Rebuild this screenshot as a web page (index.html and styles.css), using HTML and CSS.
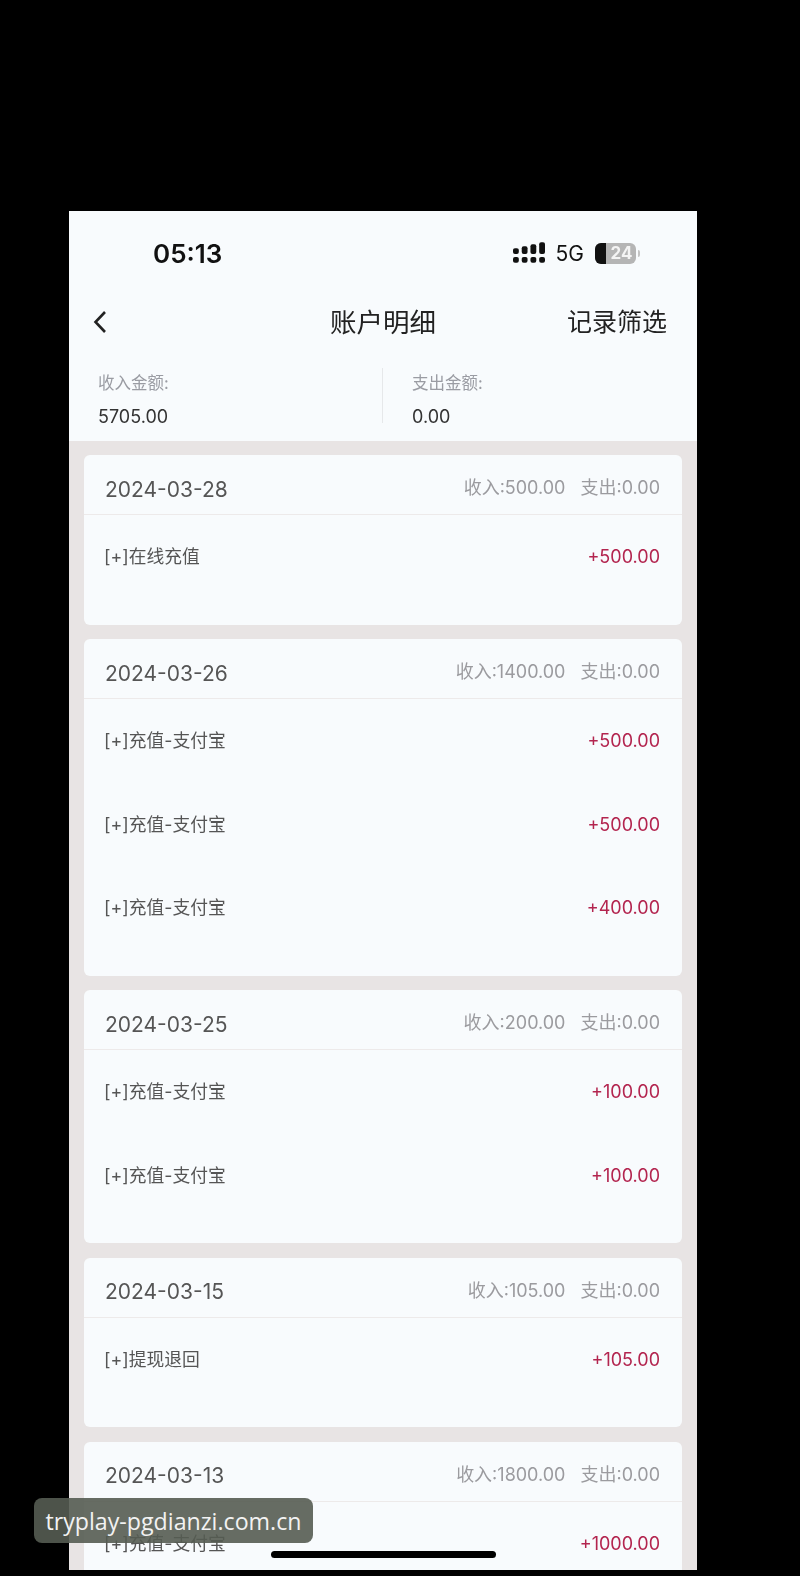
FILE: index.html
```html
<!DOCTYPE html>
<html lang="zh-CN">
<head>
    <meta charset="UTF-8">
    <meta name="viewport" content="width=device-width, initial-scale=1.0">
    <title>账户明细</title>
    <link rel="stylesheet" href="styles.css">
</head>
<body>
    <div class="phone">
        <div class="status">
            <span class="time">05:13</span>
            <div class="status-right">
                <svg class="signal" width="32" height="22" viewBox="0 0 33 22">
                    <rect x="0" y="6" width="6" height="6" rx="2"/>
                    <rect x="9" y="4" width="6" height="8" rx="2"/>
                    <rect x="18" y="2" width="6" height="10" rx="2"/>
                    <rect x="27" y="0" width="6" height="12" rx="2"/>
                    <rect x="0" y="15" width="6" height="6" rx="2"/>
                    <rect x="9" y="15" width="6" height="6" rx="2"/>
                    <rect x="18" y="15" width="6" height="6" rx="2"/>
                    <rect x="27" y="15" width="6" height="6" rx="2"/>
                </svg>
                <span class="net">5G</span>
                <div class="battery"><span class="battery-fill"></span><span class="battery-num">24</span></div>
                <span class="battery-cap"></span>
            </div>
        </div>

        <div class="nav">
            <svg class="back" width="14" height="24" viewBox="0 0 14 24">
                <path d="M12 2 L2.5 12 L12 22" fill="none" stroke="#222" stroke-width="2.6"/>
            </svg>
            <span class="nav-title">账户明细</span>
            <span class="nav-action">记录筛选</span>
        </div>

        <div class="summary">
            <div class="summary-col">
                <div class="summary-label">收入金额:</div>
                <div class="summary-value">5705.00</div>
            </div>
            <div class="summary-col summary-col-out">
                <div class="summary-label">支出金额:</div>
                <div class="summary-value">0.00</div>
            </div>
        </div>

        <div class="list">
            <div class="card">
                <div class="card-head">
                    <span class="date">2024-03-28</span>
                    <span class="totals"><span>收入:500.00</span><span>支出:0.00</span></span>
                </div>
                <div class="row"><span>[+]在线充值</span><span class="amount">+500.00</span></div>
            </div>

            <div class="card">
                <div class="card-head">
                    <span class="date">2024-03-26</span>
                    <span class="totals"><span>收入:1400.00</span><span>支出:0.00</span></span>
                </div>
                <div class="row"><span>[+]充值-支付宝</span><span class="amount">+500.00</span></div>
                <div class="row"><span>[+]充值-支付宝</span><span class="amount">+500.00</span></div>
                <div class="row"><span>[+]充值-支付宝</span><span class="amount">+400.00</span></div>
            </div>

            <div class="card">
                <div class="card-head">
                    <span class="date">2024-03-25</span>
                    <span class="totals"><span>收入:200.00</span><span>支出:0.00</span></span>
                </div>
                <div class="row"><span>[+]充值-支付宝</span><span class="amount">+100.00</span></div>
                <div class="row"><span>[+]充值-支付宝</span><span class="amount">+100.00</span></div>
            </div>

            <div class="card">
                <div class="card-head">
                    <span class="date">2024-03-15</span>
                    <span class="totals"><span>收入:105.00</span><span>支出:0.00</span></span>
                </div>
                <div class="row"><span>[+]提现退回</span><span class="amount">+105.00</span></div>
            </div>

            <div class="card">
                <div class="card-head">
                    <span class="date">2024-03-13</span>
                    <span class="totals"><span>收入:1800.00</span><span>支出:0.00</span></span>
                </div>
                <div class="row"><span>[+]充值-支付宝</span><span class="amount">+1000.00</span></div>
            </div>
        </div>
    </div>

    <div class="home-bar"></div>
    <div class="watermark">tryplay-pgdianzi.com.cn</div>
</body>
</html>
```

FILE: styles.css
```css
html, body {
    margin: 0;
    height: 100%;
}
body {
    position: relative;
    width: 800px;
    height: 1576px;
    padding: 211px 0 0 69px;
    box-sizing: border-box;
    overflow: hidden;
    background: #000;
    font-family: Inter, "Noto Sans CJK SC", sans-serif;
}
.phone {
    display: flex;
    flex-direction: column;
    width: 628px;
    height: 1359px;
    overflow: hidden;
    background: #f8fbfd;
    color: #333;
    filter: blur(0.4px);
}
.status {
    display: flex;
    justify-content: space-between;
    align-items: center;
    height: 84px;
    padding: 0 57px 0 84px;
    flex-shrink: 0;
}
.time {
    font-size: 26px;
    font-weight: 600;
    color: #111;
}
.status-right {
    display: flex;
    align-items: center;
}
.signal {
    fill: #111;
}
.net {
    margin-left: 11px;
    font-size: 21px;
    color: #111;
}
.battery {
    position: relative;
    width: 41px;
    height: 21px;
    margin-left: 11px;
    border-radius: 6px;
    background: #b5b5b5;
    overflow: hidden;
}
.battery-fill {
    position: absolute;
    left: 0;
    top: 0;
    bottom: 0;
    width: 11px;
    background: #111;
}
.battery-num {
    position: absolute;
    left: 12px;
    right: 0;
    top: 0;
    line-height: 21px;
    text-align: center;
    font-size: 17px;
    font-weight: 700;
    color: #f4f4f4;
}
.battery-cap {
    width: 2px;
    height: 7px;
    margin-left: 2px;
    border-radius: 0 2px 2px 0;
    background: #c4c4c4;
}
.nav {
    position: relative;
    display: flex;
    justify-content: center;
    align-items: center;
    height: 50px;
    flex-shrink: 0;
}
.back {
    position: absolute;
    left: 24px;
    top: 15px;
}
.nav-title {
    font-size: 26.5px;
    color: #222;
}
.nav-action {
    position: absolute;
    right: 30px;
    top: 7px;
    font-size: 25px;
    color: #222;
}
.summary {
    display: flex;
    height: 96px;
    padding-top: 23px;
    box-sizing: border-box;
    flex-shrink: 0;
}
.summary-col {
    width: 313px;
    height: 55px;
    padding-left: 29px;
    box-sizing: border-box;
}
.summary-col-out {
    border-left: 1px solid #e6e8ea;
}
.summary-label {
    padding-top: 4px;
    font-size: 16.5px;
    line-height: 22px;
    color: #9a9ca3;
}
.summary-value {
    margin-top: 11px;
    font-size: 18px;
    line-height: 24px;
    color: #333;
}
.list {
    display: flex;
    flex-direction: column;
    gap: 14.5px;
    flex: 1;
    padding: 14px 15px 0;
    background: #e8e4e4;
}
.card {
    padding-bottom: 26px;
    border-radius: 6px;
    background: #f8fbfd;
    flex-shrink: 0;
}
.card-head {
    display: flex;
    justify-content: space-between;
    align-items: center;
    height: 59px;
    padding: 0 22px 0 21px;
    border-bottom: 1px solid #edeaea;
}
.date {
    padding-top: 9px;
    font-size: 21px;
    color: #555;
}
.totals {
    display: flex;
    gap: 15px;
    padding-top: 3px;
    font-size: 18px;
    color: #9b9b9f;
}
.row {
    display: flex;
    justify-content: space-between;
    height: 83.5px;
    padding: 29px 22px 0 20px;
    box-sizing: border-box;
    font-size: 17.8px;
    line-height: 26px;
    color: #555;
}
.amount {
    font-size: 18px;
    color: #b3254f;
}
.home-bar {
    position: absolute;
    left: 271px;
    top: 1551px;
    width: 225px;
    height: 7px;
    border-radius: 4px;
    background: #000;
}
.watermark {
    position: absolute;
    left: 34px;
    top: 1498px;
    width: 279px;
    height: 45px;
    border-radius: 8px;
    background: rgba(85, 92, 82, 0.9);
    font-family: "Open Sans", sans-serif;
    font-size: 23.2px;
    line-height: 47px;
    text-align: center;
    color: #f2f2f2;
}
```
